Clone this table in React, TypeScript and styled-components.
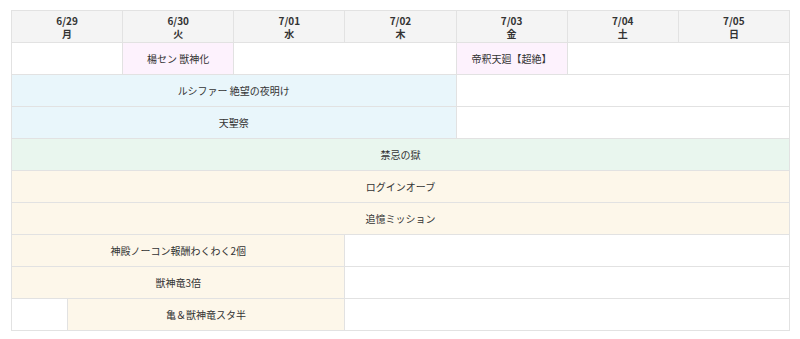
import React from "react";
import styled, { createGlobalStyle } from "styled-components";

const GlobalStyle = createGlobalStyle`
  body {
    margin: 0;
    background: #fff;
    font-family: "Noto Sans CJK JP", "Noto Sans", sans-serif;
    color: #333;
  }
`;

const Page = styled.div`
  padding: 10px 10px 0 11px;
`;

const Table = styled.table`
  width: 779px;
  table-layout: fixed;
  border-collapse: collapse;
  font-size: 10px;
`;

const HeadCell = styled.th`
  height: 31px;
  padding: 0;
  background: #f4f4f4;
  border: 1px solid #e2e2e2;
  font-weight: 700;
  text-align: center;
`;

const DayLine = styled.span`
  display: block;
  height: 13px;
  line-height: 13px;
  overflow: hidden;
`;

type Tone = "pink" | "blue" | "green" | "cream" | "none";

const tones: Record<Tone, string> = {
  pink: "#fdf2fd",
  blue: "#e9f6fb",
  green: "#e9f6ee",
  cream: "#fdf7ea",
  none: "#ffffff",
};

const Cell = styled.td<{ $tone: Tone }>`
  height: 31px;
  padding: 0;
  border: 1px solid #e2e2e2;
  background: ${(p) => tones[p.$tone]};
  text-align: center;
  line-height: 12px;
`;

const days = [
  ["6/29", "月"],
  ["6/30", "火"],
  ["7/01", "水"],
  ["7/02", "木"],
  ["7/03", "金"],
  ["7/04", "土"],
  ["7/05", "日"],
];

type Ev = { span: number; tone: Tone; text?: string };

const rows: Ev[][] = [
  [
    { span: 2, tone: "none" },
    { span: 2, tone: "pink", text: "楊セン 獣神化" },
    { span: 4, tone: "none" },
    { span: 2, tone: "pink", text: "帝釈天廻【超絶】" },
    { span: 4, tone: "none" },
  ],
  [
    { span: 8, tone: "blue", text: "ルシファー 絶望の夜明け" },
    { span: 6, tone: "none" },
  ],
  [
    { span: 8, tone: "blue", text: "天聖祭" },
    { span: 6, tone: "none" },
  ],
  [{ span: 14, tone: "green", text: "禁忌の獄" }],
  [{ span: 14, tone: "cream", text: "ログインオーブ" }],
  [{ span: 14, tone: "cream", text: "追憶ミッション" }],
  [
    { span: 6, tone: "cream", text: "神殿ノーコン報酬わくわく2個" },
    { span: 8, tone: "none" },
  ],
  [
    { span: 6, tone: "cream", text: "獣神竜3倍" },
    { span: 8, tone: "none" },
  ],
  [
    { span: 1, tone: "none" },
    { span: 5, tone: "cream", text: "亀＆獣神竜スタ半" },
    { span: 8, tone: "none" },
  ],
];

export default function App() {
  return (
    <Page>
      <GlobalStyle />
      <Table>
        <colgroup>
          {Array.from({ length: 14 }).map((_, i) => (
            <col key={i} />
          ))}
        </colgroup>
        <thead>
          <tr>
            {days.map(([date, wd]) => (
              <HeadCell key={date} colSpan={2}>
                <DayLine>{date}</DayLine>
                <DayLine>{wd}</DayLine>
              </HeadCell>
            ))}
          </tr>
        </thead>
        <tbody>
          {rows.map((row, r) => (
            <tr key={r}>
              {row.map((ev, i) => (
                <Cell key={i} colSpan={ev.span} $tone={ev.tone}>
                  {ev.text}
                </Cell>
              ))}
            </tr>
          ))}
        </tbody>
      </Table>
    </Page>
  );
}
